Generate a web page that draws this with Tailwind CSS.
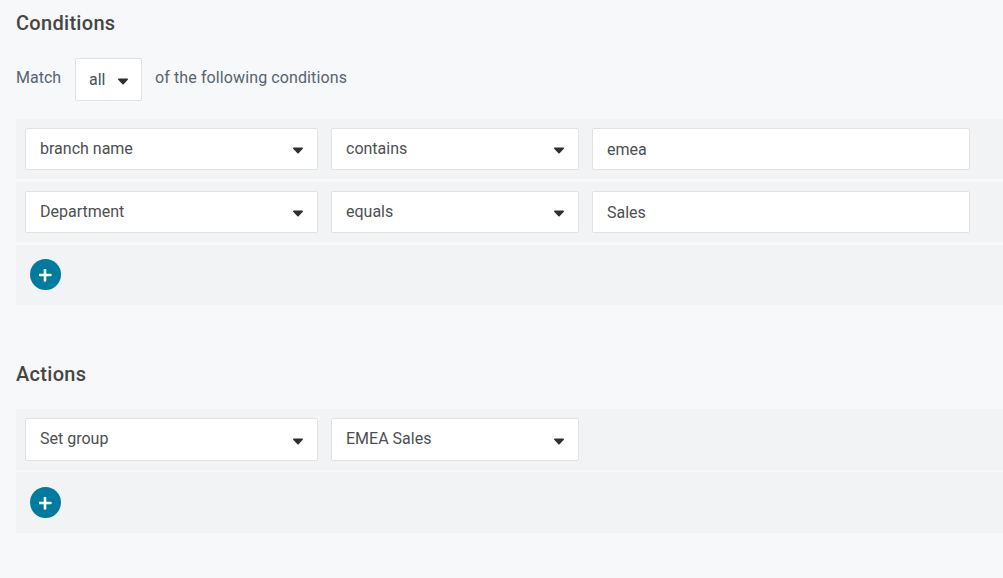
<!DOCTYPE html>
<html>
<head>
<meta charset="utf-8">
<script src="https://cdn.jsdelivr.net/npm/@tailwindcss/browser@4"></script>
</head>
<body class="w-[1003px] h-[578px] overflow-hidden bg-[#f7f8fa] font-['Roboto',sans-serif] text-[16px] text-[#4d4f52]">
<div class="pl-4">
  <h2 class="h-[46px] pt-[9px] text-[20px] leading-[28px] font-medium tracking-[0.3px] text-[#454545]">Conditions</h2>
  <div class="mt-[12px] flex h-[43px] items-center text-[#56646e]">
    <span class="w-[59px] leading-[38px] -mt-[3px]">Match</span>
    <div class="flex h-[43px] w-[67px] items-center rounded-[2px] border border-[#e2e2e2] bg-white pl-[13px] text-[#46525a]">
      <span class="leading-[24px]">all</span>
      <svg class="ml-[13px] mt-[3px]" width="10" height="7" viewBox="0 0 10 7"><path d="M0.8 0.5h8.4c.7 0 1 .7.6 1.2L5.6 6.2c-.3.4-.9.4-1.2 0L.2 1.7C-.2 1.2.1.5.8.5z" fill="#2f2f2f"/></svg>
    </div>
    <span class="ml-[13px] -mt-[3px] leading-[38px] tracking-[0.11px]">of the following conditions</span>
  </div>

  <div class="mt-[18px] flex flex-col gap-[3px]">
    <div class="flex h-[60px] items-center gap-[13px] bg-[#f2f3f5] pl-[9px]">
      <div class="flex h-[42px] w-[293px] items-center justify-between rounded-[2px] border border-[#e2e2e2] bg-white pl-[14px] pr-[14px]">
        <span class="leading-[24px]">branch name</span>
        <svg class="mt-[2px]" width="10" height="7" viewBox="0 0 10 7"><path d="M0.8 0.5h8.4c.7 0 1 .7.6 1.2L5.6 6.2c-.3.4-.9.4-1.2 0L.2 1.7C-.2 1.2.1.5.8.5z" fill="#2f2f2f"/></svg>
      </div>
      <div class="flex h-[42px] w-[248px] items-center justify-between rounded-[2px] border border-[#e2e2e2] bg-white pl-[14px] pr-[14px]">
        <span class="leading-[24px]">contains</span>
        <svg class="mt-[2px]" width="10" height="7" viewBox="0 0 10 7"><path d="M0.8 0.5h8.4c.7 0 1 .7.6 1.2L5.6 6.2c-.3.4-.9.4-1.2 0L.2 1.7C-.2 1.2.1.5.8.5z" fill="#2f2f2f"/></svg>
      </div>
      <div class="flex h-[42px] w-[378px] items-center rounded-[2px] border border-[#e2e2e2] bg-white pl-[14px]">
        <span class="mt-[2px] leading-[24px]">emea</span>
      </div>
    </div>
    <div class="flex h-[60px] items-center gap-[13px] bg-[#f2f3f5] pl-[9px]">
      <div class="flex h-[42px] w-[293px] items-center justify-between rounded-[2px] border border-[#e2e2e2] bg-white pl-[14px] pr-[14px]">
        <span class="leading-[24px]">Department</span>
        <svg class="mt-[2px]" width="10" height="7" viewBox="0 0 10 7"><path d="M0.8 0.5h8.4c.7 0 1 .7.6 1.2L5.6 6.2c-.3.4-.9.4-1.2 0L.2 1.7C-.2 1.2.1.5.8.5z" fill="#2f2f2f"/></svg>
      </div>
      <div class="flex h-[42px] w-[248px] items-center justify-between rounded-[2px] border border-[#e2e2e2] bg-white pl-[14px] pr-[14px]">
        <span class="leading-[24px]">equals</span>
        <svg class="mt-[2px]" width="10" height="7" viewBox="0 0 10 7"><path d="M0.8 0.5h8.4c.7 0 1 .7.6 1.2L5.6 6.2c-.3.4-.9.4-1.2 0L.2 1.7C-.2 1.2.1.5.8.5z" fill="#2f2f2f"/></svg>
      </div>
      <div class="flex h-[42px] w-[378px] items-center rounded-[2px] border border-[#e2e2e2] bg-white pl-[14px]">
        <span class="mt-[2px] leading-[24px]">Sales</span>
      </div>
    </div>
    <div class="flex h-[60px] items-center bg-[#f2f3f5] pl-[14px]">
      <div class="-mt-[1px] flex h-[31px] w-[31px] items-center justify-center rounded-full bg-[#007ba0]">
        <svg class="mt-[1px]" width="13" height="13" viewBox="0 0 13 13"><path d="M6 .5v11M.5 6h11" stroke="#fff" stroke-width="2.6" stroke-linecap="round"/></svg>
      </div>
    </div>
  </div>

  <h2 class="mt-[55px] h-[28px] text-[20px] leading-[28px] font-medium tracking-[0.3px] text-[#454545]">Actions</h2>
  <div class="mt-[21px] flex flex-col gap-[2px]">
    <div class="flex h-[61px] items-center gap-[13px] bg-[#f2f3f5] pl-[9px]">
      <div class="flex h-[43px] w-[293px] items-center justify-between rounded-[2px] border border-[#e2e2e2] bg-white pl-[14px] pr-[14px]">
        <span class="-mt-[2px] leading-[24px]">Set group</span>
        <svg class="mt-[3px]" width="10" height="7" viewBox="0 0 10 7"><path d="M0.8 0.5h8.4c.7 0 1 .7.6 1.2L5.6 6.2c-.3.4-.9.4-1.2 0L.2 1.7C-.2 1.2.1.5.8.5z" fill="#2f2f2f"/></svg>
      </div>
      <div class="flex h-[43px] w-[248px] items-center justify-between rounded-[2px] border border-[#e2e2e2] bg-white pl-[14px] pr-[14px]">
        <span class="-mt-[2px] leading-[24px]">EMEA Sales</span>
        <svg class="mt-[3px]" width="10" height="7" viewBox="0 0 10 7"><path d="M0.8 0.5h8.4c.7 0 1 .7.6 1.2L5.6 6.2c-.3.4-.9.4-1.2 0L.2 1.7C-.2 1.2.1.5.8.5z" fill="#2f2f2f"/></svg>
      </div>
    </div>
    <div class="flex h-[61px] items-center bg-[#f2f3f5] pl-[14px]">
      <div class="flex h-[31px] w-[31px] items-center justify-center rounded-full bg-[#007ba0]">
        <svg class="mt-[1px]" width="13" height="13" viewBox="0 0 13 13"><path d="M6 .5v11M.5 6h11" stroke="#fff" stroke-width="2.6" stroke-linecap="round"/></svg>
      </div>
    </div>
  </div>
</div>
</body>
</html>
